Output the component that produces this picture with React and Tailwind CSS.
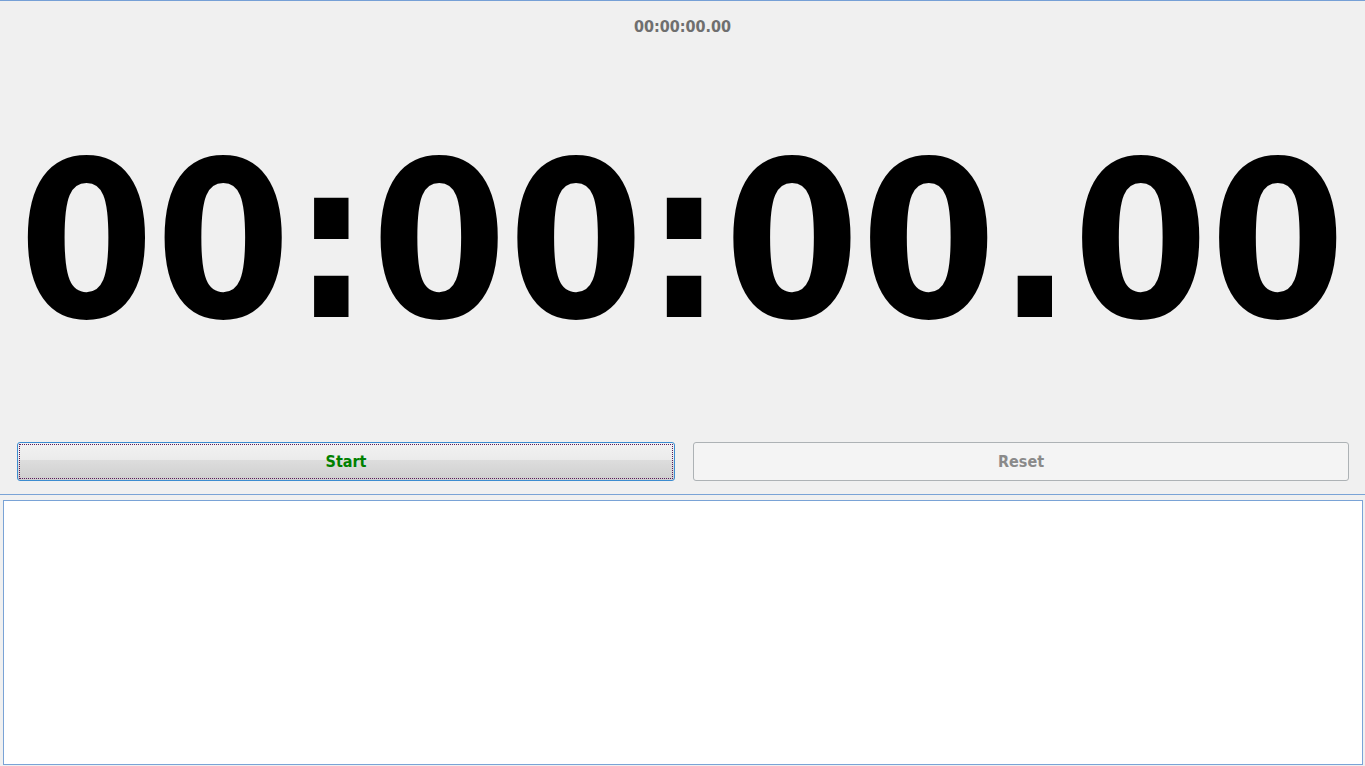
import React from "react";

function App() {
  const time = "00:00:00.00";

  return (
    <div className="h-[766px] w-full overflow-hidden bg-[#f0f0f0] border-t border-[#76a0d6] flex flex-col" style={{ fontFamily: '"DejaVu Sans Condensed", "DejaVu Sans", sans-serif' }}>
      {/* Clock area */}
      <div className="h-[494px] flex flex-col border-b border-[#7aa3d6]">
        <div className="pt-[17px] text-center text-[16px] font-bold leading-[18px] text-[#6f6f6f]">
          {time}
        </div>

        <div className="flex-1 flex items-center justify-center pt-[7px]">
          <span className="text-[217px] font-bold leading-none tracking-[1px] text-black">
            {time}
          </span>
        </div>

        {/* Buttons */}
        <div className="flex gap-[18px] pl-[17px] pr-[16px] pb-[13px]">
          <button className="flex-1 h-[39px] rounded-[3px] border border-[#3c8cd0] p-[1px] bg-[linear-gradient(to_bottom,#f2f2f2_0%,#ebebeb_45%,#dddddd_46%,#cfcfcf_100%)]">
            <span className="flex h-full w-full items-center justify-center border border-dotted border-[#5a1a5a] text-[16px] font-bold text-[#008000]">
              Start
            </span>
          </button>
          <button disabled className="flex-1 h-[39px] rounded-[3px] border border-[#adb2b5] bg-[#f4f4f4] text-[16px] font-bold text-[#8a8a8a]">
            Reset
          </button>
        </div>
      </div>

      {/* Log area */}
      <div className="flex-1 pt-[5px] pl-[3px] pr-[2px] pb-[1px] flex">
        <div className="flex-1 bg-white border border-[#7aa3d6]"></div>
      </div>
    </div>
  );
}

export default App;
